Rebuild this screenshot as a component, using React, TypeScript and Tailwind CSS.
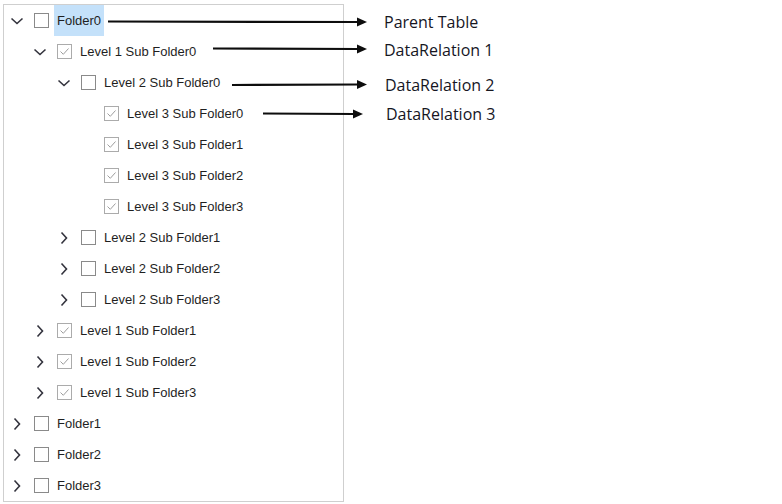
import type { ReactNode } from "react";

type Node = {
  label: string;
  checked?: boolean;
  expanded?: boolean;
  selected?: boolean;
  leaf?: boolean;
  children?: Node[];
};

const level3 = [0, 1, 2, 3].map((i) => ({
  label: `Level 3 Sub Folder${i}`,
  checked: true,
  leaf: true,
}));

const tree: Node[] = [
  {
    label: "Folder0",
    expanded: true,
    selected: true,
    children: [
      {
        label: "Level 1 Sub Folder0",
        checked: true,
        expanded: true,
        children: [
          { label: "Level 2 Sub Folder0", expanded: true, children: level3 },
          { label: "Level 2 Sub Folder1" },
          { label: "Level 2 Sub Folder2" },
          { label: "Level 2 Sub Folder3" },
        ],
      },
      { label: "Level 1 Sub Folder1", checked: true },
      { label: "Level 1 Sub Folder2", checked: true },
      { label: "Level 1 Sub Folder3", checked: true },
    ],
  },
  { label: "Folder1" },
  { label: "Folder2" },
  { label: "Folder3" },
];

const indent = ["pl-[5px]", "pl-[28px]", "pl-[52px]", "pl-[75px]"];

function Chevron({ open }: { open: boolean }) {
  return (
    <svg width="16" height="16" viewBox="0 0 16 16" fill="none">
      {open ? (
        <path d="M2.5 5.5 L8 10.5 L13.5 5.5" stroke="#33333d" strokeWidth="1.6" />
      ) : (
        <path d="M5.5 2.5 L10.5 8 L5.5 13.5" stroke="#33333d" strokeWidth="1.6" />
      )}
    </svg>
  );
}

function Checkbox({ checked }: { checked?: boolean }) {
  return (
    <span
      className={`flex h-[15px] w-[15px] shrink-0 items-center justify-center border bg-white ${
        checked ? "border-[#ababab]" : "border-[#8a8a8a]"
      }`}
    >
      {checked ? (
        <svg width="11" height="11" viewBox="0 0 11 11" fill="none">
          <path d="M1.5 5.5 L4.3 8.3 L9.5 2.5" stroke="#9e9e9e" strokeWidth="1" />
        </svg>
      ) : null}
    </span>
  );
}

function Rows({ nodes, level }: { nodes: Node[]; level: number }): ReactNode {
  return nodes.map((node) => (
    <div key={node.label}>
      <div className={`flex h-[31px] items-center ${indent[level]}`}>
        <span className="flex w-4 shrink-0 justify-center">
          {node.leaf ? null : <Chevron open={Boolean(node.expanded)} />}
        </span>
        <span className="ml-[9px]">
          <Checkbox checked={node.checked} />
        </span>
        <span
          className={`ml-[5px] flex h-[31px] items-center px-[3px] ${
            node.selected ? "bg-[#c4e1fa]" : ""
          }`}
        >
          {node.label}
        </span>
      </div>
      {node.expanded && node.children ? (
        <Rows nodes={node.children} level={level + 1} />
      ) : null}
    </div>
  ));
}

const arrows = [
  { d: "M108 21.5 C 200 22, 290 22.5, 358 22", tip: [367, 22] },
  { d: "M213 48.5 C 270 48.5, 320 49, 358 49", tip: [367, 49] },
  { d: "M232 85 C 280 85, 320 84.5, 358 84.5", tip: [367, 84.5] },
  { d: "M263 113.5 C 300 113.5, 330 114, 354 114", tip: [363, 114] },
];

const labels = [
  { text: "Parent Table", cls: "left-[384px] top-[10px]" },
  { text: "DataRelation 1", cls: "left-[384px] top-[38px]" },
  { text: "DataRelation 2", cls: "left-[385px] top-[73px]" },
  { text: "DataRelation 3", cls: "left-[386px] top-[102px]" },
];

export default function App() {
  return (
    <div className="relative h-[504px] w-[782px] overflow-hidden bg-white">
      <div className="ml-[3px] mt-[4px] h-[498px] w-[341px] border border-[#cfcfcf] font-['Liberation_Sans',sans-serif] text-[13px] text-[#1f1f1f]">
        <Rows nodes={tree} level={0} />
      </div>

      <svg className="absolute left-0 top-0" width="782" height="504">
        {arrows.map((a) => (
          <g key={a.d}>
            <path d={a.d} stroke="#0d0d0d" strokeWidth="2.2" fill="none" />
            <polygon
              points={`${a.tip[0]},${a.tip[1]} ${a.tip[0] - 10},${a.tip[1] - 4.5} ${a.tip[0] - 10},${a.tip[1] + 4.5}`}
              fill="#0d0d0d"
            />
          </g>
        ))}
      </svg>

      {labels.map((l) => (
        <span
          key={l.text}
          className={`absolute ${l.cls} font-['Open_Sans',sans-serif] text-[16px] font-medium leading-[24px] text-[#16161f]`}
        >
          {l.text}
        </span>
      ))}
    </div>
  );
}
